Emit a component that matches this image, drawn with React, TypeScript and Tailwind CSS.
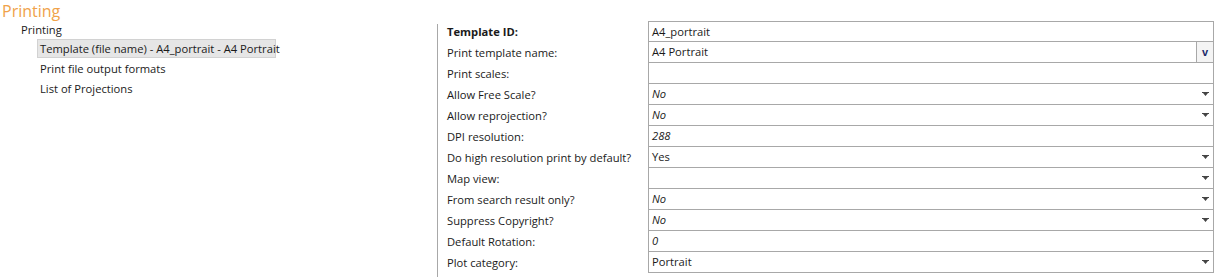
import React from 'react';

type Row = {
  label: string;
  value: string;
  italic?: boolean;
  bold?: boolean;
  dropdown?: boolean;
  button?: boolean;
};

const rows: Row[] = [
  { label: 'Template ID:', value: 'A4_portrait', bold: true },
  { label: 'Print template name:', value: 'A4 Portrait', button: true },
  { label: 'Print scales:', value: '' },
  { label: 'Allow Free Scale?', value: 'No', italic: true, dropdown: true },
  { label: 'Allow reprojection?', value: 'No', italic: true, dropdown: true },
  { label: 'DPI resolution:', value: '288', italic: true },
  { label: 'Do high resolution print by default?', value: 'Yes', dropdown: true },
  { label: 'Map view:', value: '', dropdown: true },
  { label: 'From search result only?', value: 'No', italic: true, dropdown: true },
  { label: 'Suppress Copyright?', value: 'No', italic: true, dropdown: true },
  { label: 'Default Rotation:', value: '0', italic: true },
  { label: 'Plot category:', value: 'Portrait', dropdown: true },
];

const Arrow = () => (
  <svg width="7" height="4" viewBox="0 0 7 4" className="mr-[4px]">
    <path d="M0 0h7v1H0zM1 1h5L3.5 4z" fill="#444" />
  </svg>
);

const App = () => {
  return (
    <div className="w-[1216px] h-[277px] bg-white overflow-hidden text-[#1a1a1a] text-[11.2px] font-['Open_Sans',sans-serif] flex whitespace-nowrap">
      <div className="w-[437px] shrink-0">
        <div className="text-[#f0a24a] text-[16px] leading-[22px] pl-[2px]">Printing</div>
        <div className="pl-[21px] leading-[16px]">Printing</div>
        <div className="pl-[37px] flex flex-col mt-[1px]">
          <div className="w-[239px] h-[19px] bg-[#e6e6e6] border border-[#d2d2d2] pl-[2px] leading-[17px]">
            Template (file name) - A4_portrait - A4 Portrait
          </div>
          <div className="pl-[3px] h-[21px] leading-[21px]">Print file output formats</div>
          <div className="pl-[3px] h-[20px] leading-[20px]">List of Projections</div>
        </div>
      </div>
      <div className="mt-[24px] w-px bg-[#a8a8a8] shrink-0" />
      <div className="flex flex-col mt-[21px]">
        {rows.map((r, i) => (
          <div key={i} className="flex h-[21px]">
            <div className={`w-[210px] pl-[9px] leading-[22px] ${r.bold ? 'font-bold' : ''}`}>{r.label}</div>
            <div
              className={`w-[566px] flex items-center border-l border-r border-[#a8a8a8] ${i === 0 ? 'border-t' : ''} border-b`}
            >
              <div className={`flex-1 pl-[3px] pt-[1px] ${r.italic ? 'italic' : ''}`}>{r.value}</div>
              {r.dropdown && <Arrow />}
              {r.button && (
                <div className="w-[17px] self-stretch border-l border-[#a8a8a8] bg-[#f4f4f4] flex items-center justify-center text-[#1b2a6b] font-bold font-['Liberation_Sans',sans-serif] text-[11px]">
                  v
                </div>
              )}
            </div>
          </div>
        ))}
      </div>
    </div>
  );
};

export default App;
